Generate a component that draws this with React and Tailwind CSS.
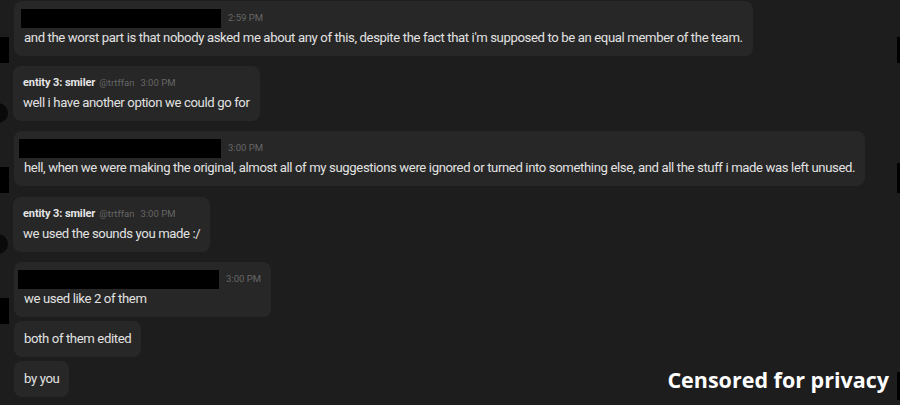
import React from 'react';

const font = { fontFamily: 'Roboto, "Noto Sans", sans-serif' };

const Header = ({ name, handle, time, censor }) => (
    <div className="flex items-center h-[19px] gap-[4px]">
        {censor ? (
            <div className={`h-[19px] bg-black mr-[1px] ${censor}`} />
        ) : (
            <>
                <span className="text-[11px] font-bold text-[#e6e6e6] tracking-[-0.1px]">{name}</span>
                <span className="text-[9.5px] text-[#666666]">{handle}</span>
            </>
        )}
        <span className="text-[9.5px] text-[#666666] ml-[2px]">{time}</span>
    </div>
);

const Bubble = ({ header, children }) => (
    <div className="self-start rounded-[8px] bg-[#272727] px-[10px] py-[8px]">
        {header}
        <div className="text-[13.15px] leading-[20px] tracking-[-0.38px] text-[#e2e2e2] whitespace-nowrap">{children}</div>
    </div>
);

const Avatar = ({ round }) => (
    <div className="h-0 shrink-0">
        {round ? (
            <div className="w-[20px] h-[20px] -ml-[12px] mt-[37px] rounded-full bg-[#0a0a0a]" />
        ) : (
            <div className="w-[9px] h-[26px] mt-[36px] bg-black" />
        )}
    </div>
);

const Group = ({ round, children, className = '' }) => (
    <div className={`flex gap-[5px] ${className}`}>
        <div className={round ? 'w-[8px] shrink-0' : 'w-[9px] shrink-0'}>
            <Avatar round={round} />
        </div>
        <div className="flex flex-col gap-[4px]">{children}</div>
    </div>
);

export default function App() {
    return (
        <div className="relative w-[900px] h-[405px] overflow-hidden bg-[#1d1d1d] pt-[1px]" style={font}>
            <div className="flex flex-col gap-[10px]">
                <Group>
                    <Bubble header={<Header censor="w-[200px] -ml-[3px]" time="2:59 PM" />}>
                        and the worst part is that nobody asked me about any of this, despite the fact that i'm supposed to be an equal member of the team.
                    </Bubble>
                </Group>
                <Group round>
                    <Bubble header={<Header name="entity 3: smiler" handle="@trtffan" time="3:00 PM" />}>
                        well i have another option we could go for
                    </Bubble>
                </Group>
                <Group>
                    <Bubble header={<Header censor="w-[202px] -ml-[5px]" time="3:00 PM" />}>
                        hell, when we were making the original, almost all of my suggestions were ignored or turned into something else, and all the stuff i made was left unused.
                    </Bubble>
                </Group>
                <Group round className="mt-[1px]">
                    <Bubble header={<Header name="entity 3: smiler" handle="@trtffan" time="3:00 PM" />}>
                        we used the sounds you made :/
                    </Bubble>
                </Group>
                <Group>
                    <Bubble header={<Header censor="w-[201px] -ml-[6px]" time="3:00 PM" />}>we used like 2 of them</Bubble>
                    <Bubble>both of them edited</Bubble>
                    <Bubble>by you</Bubble>
                </Group>
            </div>

            {/* cropped avatars on the right edge */}
            <div className="absolute right-0 top-[37px] w-[3px] h-[26px] bg-black" />
            <div className="absolute right-0 top-[163px] w-[3px] h-[30px] bg-black" />
            <div className="absolute right-0 top-[372px] w-[3px] h-[28px] bg-black" />

            <div
                className="absolute right-[11px] bottom-[9px] text-[21.5px] font-bold text-white"
                style={{ fontFamily: '"Open Sans", Lato, sans-serif' }}
            >
                Censored for privacy
            </div>
        </div>
    );
}
